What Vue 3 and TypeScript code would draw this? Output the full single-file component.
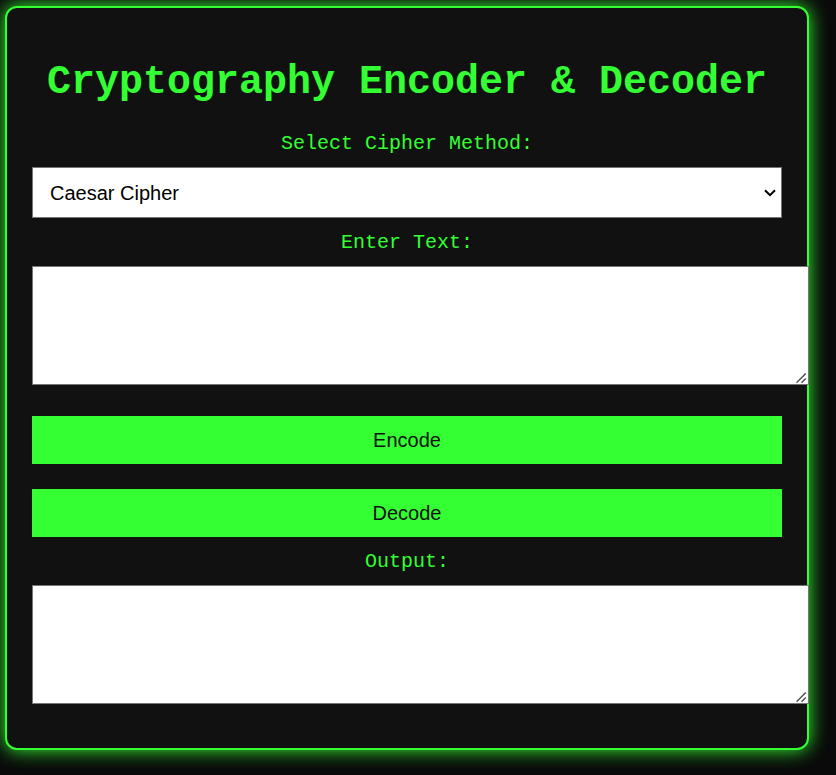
<script setup lang="ts">
import { ref } from 'vue'

type Method = 'caesar' | 'base64' | 'reverse'

const SHIFT = 3
const method = ref<Method>('caesar')
const input = ref('')
const output = ref('')

function caesar(text: string, shift: number): string {
  return text.replace(/[a-z]/gi, (ch) => {
    const base = ch <= 'Z' ? 65 : 97
    return String.fromCharCode(((ch.charCodeAt(0) - base + shift + 26) % 26) + base)
  })
}

function run(decode: boolean): void {
  const text = input.value
  if (method.value === 'caesar') {
    output.value = caesar(text, decode ? -SHIFT : SHIFT)
  } else if (method.value === 'reverse') {
    output.value = [...text].reverse().join('')
  } else {
    try {
      output.value = decode ? atob(text) : btoa(text)
    } catch {
      output.value = ''
    }
  }
}
</script>

<template>
  <main class="container">
    <h1>Cryptography Encoder &amp; Decoder</h1>

    <label for="method">Select Cipher Method:</label>
    <div class="select-wrap">
      <select id="method" v-model="method">
        <option value="caesar">Caesar Cipher</option>
        <option value="base64">Base64</option>
        <option value="reverse">Reverse</option>
      </select>
      <svg class="chevron" viewBox="0 0 12 8" aria-hidden="true">
        <path d="M1 1.2 6 6.2 11 1.2" fill="none" stroke="#000" stroke-width="2" />
      </svg>
    </div>

    <label for="input">Enter Text:</label>
    <div class="area">
      <textarea id="input" v-model="input"></textarea>
      <svg class="grip" viewBox="0 0 12 12" aria-hidden="true">
        <path d="M0.5 10.8 9.8 1.5M5.5 10.8 9.8 6.5" />
      </svg>
    </div>

    <div class="actions">
      <button type="button" @click="run(false)">Encode</button>
      <button type="button" @click="run(true)">Decode</button>
    </div>

    <label for="output">Output:</label>
    <div class="area">
      <textarea id="output" v-model="output" readonly></textarea>
      <svg class="grip" viewBox="0 0 12 12" aria-hidden="true">
        <path d="M0.5 10.8 9.8 1.5M5.5 10.8 9.8 6.5" />
      </svg>
    </div>
  </main>
</template>

<style>
body {
  background: #0a0a0a;
}
</style>

<style scoped>
.container {
  display: flow-root;
  margin: 6px 27px 25px 5px;
  padding: 25px 25px 44px;
  border: 2px solid #33ff33;
  border-radius: 12px;
  background: #111;
  box-shadow: 0 0 19px #33ff33;
  color: #33ff33;
  font-family: "Courier New", "Liberation Mono", monospace;
  text-align: center;
}

h1 {
  margin: 27px 0;
  font-size: 40px;
  line-height: 45px;
  font-weight: 700;
}

label {
  display: block;
  margin: 13px 0 12px;
  font-size: 20px;
  line-height: 23px;
}

.select-wrap {
  position: relative;
}

select {
  display: block;
  box-sizing: border-box;
  width: 100%;
  height: 51px;
  padding: 0 36px 0 17px;
  border: 1px solid #767676;
  border-radius: 0;
  background: #fff;
  color: #000;
  font: 20px "Liberation Sans", Arial, sans-serif;
  appearance: none;
}

.chevron {
  position: absolute;
  top: 22px;
  right: 6px;
  width: 12px;
  height: 8px;
  pointer-events: none;
}

/* Text areas run past the container's padding to its outer edge. */
.area {
  position: relative;
  margin-right: -27px;
}

textarea {
  display: block;
  box-sizing: border-box;
  width: 100%;
  height: 119px;
  margin: 0;
  padding: 12px;
  border: 1px solid #767676;
  background: #fff;
  color: #000;
  font: 20px "Liberation Sans", Arial, sans-serif;
  resize: vertical;
}

.grip {
  position: absolute;
  right: 1px;
  bottom: 1px;
  width: 12px;
  height: 12px;
  background: #fff;
  fill: none;
  stroke: #555;
  stroke-width: 1.6;
  pointer-events: none;
}

.actions {
  display: grid;
  gap: 25px;
  margin-top: 31px;
}

button {
  height: 48px;
  padding: 0 12px;
  border: none;
  background: #33ff33;
  color: #111;
  font: 20px "Liberation Sans", Arial, sans-serif;
  cursor: pointer;
}
</style>
